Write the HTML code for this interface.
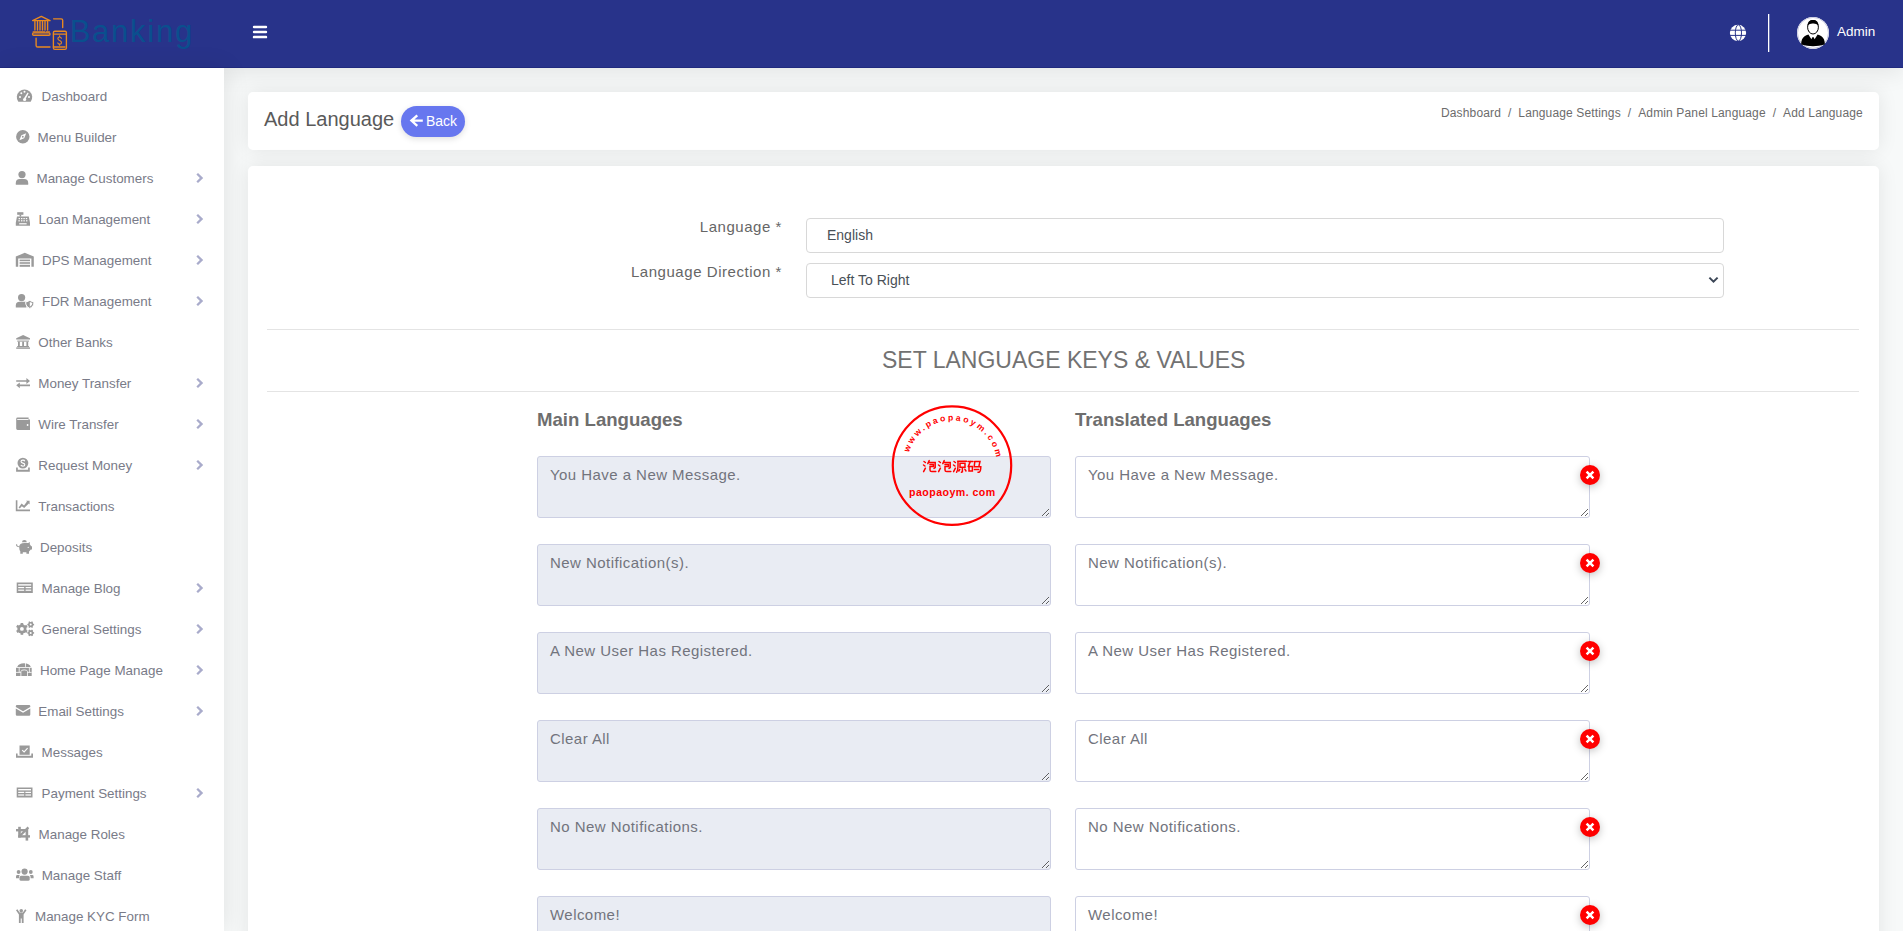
<!DOCTYPE html>
<html><head><meta charset="utf-8">
<style>
*{box-sizing:border-box;margin:0;padding:0}
html,body{width:1903px;height:931px;overflow:hidden}
body{background:#f7f9f9;font-family:"Liberation Sans",sans-serif;position:relative}
.hdr{position:absolute;left:0;top:0;width:1903px;height:68px;background:#28338a;border-bottom:1px solid #202a7e;box-shadow:0 4px 24px rgba(0,0,0,0.09)}
.logo-t{position:absolute;left:69.7px;top:14px;font-size:31px;color:#0a4f8e;letter-spacing:1.75px;line-height:36px}
.side{position:absolute;left:0;top:68px;width:224px;height:863px;background:#fff;box-shadow:2px 0 24px rgba(0,0,0,0.09)}
.card{position:absolute;left:248px;width:1631px;background:#fff;border-radius:5px;box-shadow:0 0 20px rgba(0,0,0,0.085)}
.si{position:absolute;left:0;width:224px;height:20px;font-size:14px;color:#6f737e;line-height:20px}
.si span{position:absolute;top:0;white-space:nowrap}
.si svg{position:absolute}
.chev{position:absolute;left:196px;top:5px}
.st{position:absolute;font-size:13.4px;color:#797b88;line-height:20px;white-space:nowrap}
.abs{position:absolute;white-space:nowrap}
textarea{position:absolute;width:514px;height:62px;border:1px solid #cdd0e3;border-radius:3px;font-family:"Liberation Sans",sans-serif;font-size:15px;color:#72747d;padding:8px 12px;resize:vertical;letter-spacing:0.45px;line-height:19px;outline:none}
textarea.l{left:537px;background:#e9ecf3}
textarea.r{left:1075px;width:515px;background:#fff}
.x{position:absolute;left:1580px;width:20px;height:20px;border-radius:50%;background:#ff0000;box-shadow:0 2px 8px rgba(0,0,0,0.25)}
.x svg{position:absolute;left:0;top:0}
</style></head><body>
<div class="hdr"></div>
<div class="logo-t">Banking</div>

<svg width="1903" height="68" style="position:absolute;left:0;top:0">
<g fill="none" stroke="#ea8a1f" stroke-width="1.35" stroke-linecap="round" stroke-linejoin="round">
<path d="M32.6 20.6L41.3 16.4L50 20.6Z"/>
<path d="M34.9 21.4V30M37.5 21.4V30M40 21.4V30M42.5 21.4V30M45 21.4V30M47.6 21.4V30"/>
<path d="M33.2 31.9H44.6M46.3 31.9H49.4"/>
<rect x="32.6" y="32.9" width="17.4" height="2.3" rx="1"/>
<path d="M53.6 18.8H61.2Q62.7 18.8 62.7 20.3V27.6"/>
<path d="M36.1 38.2V45.4Q36.1 47 37.7 47H50"/>
<rect x="53.4" y="31.2" width="13" height="18.2" rx="1.4"/>
<path d="M53.4 34.1H66.4M53.4 47H65"/>
<path d="M61.4 38.2Q60.8 36.9 59.5 37Q57.9 37.1 57.9 38.6Q57.9 40 59.6 40.6Q61.5 41.2 61.5 42.7Q61.5 44.1 59.7 44.1Q58.4 44.1 57.8 42.9M59.6 35.9V37M59.6 44.1V45.2" stroke-width="1.1"/>
</g>
<g fill="#fff">
<rect x="252.8" y="25.8" width="14.4" height="2.5" rx="1.2"/>
<rect x="252.8" y="30.8" width="14.4" height="2.5" rx="1.2"/>
<rect x="252.8" y="35.85" width="14.4" height="2.5" rx="1.2"/>
</g>
<g>
<circle cx="1738" cy="32.9" r="8.1" fill="#fff"/>
<g fill="none" stroke="#28338a" stroke-width="1">
<path d="M1729.8 30.2H1746.2M1729.8 35.4H1746.2"/>
<ellipse cx="1738.4" cy="32.9" rx="3.1" ry="8.1"/>
</g>
</g>
<rect x="1768" y="14" width="1.3" height="38" fill="#fff"/>
<circle cx="1813" cy="32.9" r="16" fill="#fff"/>
<circle cx="1813" cy="32.9" r="15.5" fill="none" stroke="#c9cbe0" stroke-width="1"/>
<path d="M1801.2 44.6Q1801 38.6 1804.6 36.2Q1806.2 35 1808.4 34.4L1811.4 39.2L1812.2 37.4H1813.8L1814.6 39.2L1817.6 34.4Q1819.8 35 1821.4 36.2Q1825 38.6 1824.8 44.6Q1819 46.2 1813 46.2Q1807 46.2 1801.2 44.6Z" fill="#000"/>
<path d="M1812.3 37.6H1813.7L1814.4 43L1813 45L1811.6 43Z" fill="#000"/>
<ellipse cx="1813" cy="27.2" rx="5.4" ry="6.8" fill="none" stroke="#000" stroke-width="1"/>
<path d="M1807.6 25.6Q1807.4 20 1813 20Q1818.6 20 1818.4 25.6Q1816.2 23.4 1813 23.6Q1809.8 23.4 1807.6 25.6Z" fill="#000"/>
</svg>
<div class="abs" style="left:1837px;top:24px;font-size:13.5px;color:#fff;line-height:16px">Admin</div>
<div class="side"></div>
<div class="card" style="top:92px;height:58px"></div>
<div class="card" style="top:166px;height:800px"></div>
<div class="abs" style="left:264px;top:108px;font-size:20px;color:#5a5a5a;line-height:23px">Add Language</div>
<div class="abs" style="left:401px;top:106px;width:64px;height:31px;border-radius:16px;background:#6777ef;box-shadow:0 2px 6px rgba(0,0,0,0.13)"></div>
<svg width="16" height="16" style="position:absolute;left:408px;top:113px"><path d="M9.3 2.3L3.4 7.6L9.3 12.9M3.4 7.6H14.8" fill="none" stroke="#fff" stroke-width="2.3" stroke-linejoin="miter"/></svg>
<div class="abs" style="left:426px;top:113px;font-size:14px;color:#fff;line-height:16px">Back</div>
<div class="abs" style="left:1441px;top:106px;font-size:12px;color:#6c6c6c;line-height:14px;letter-spacing:0.14px">Dashboard&nbsp;&nbsp;/&nbsp;&nbsp;Language Settings&nbsp;&nbsp;/&nbsp;&nbsp;Admin Panel Language&nbsp;&nbsp;/&nbsp;&nbsp;Add Language</div>

<div class="abs" style="left:482px;width:300px;text-align:right;top:218px;font-size:15px;color:#666;line-height:17px;letter-spacing:0.55px">Language *</div>
<div class="abs" style="left:482px;width:300px;text-align:right;top:263px;font-size:15px;color:#666;line-height:17px;letter-spacing:0.55px">Language Direction *</div>
<div class="abs" style="left:806px;top:218px;width:918px;height:35px;border:1px solid #d8d8d8;border-radius:4px"></div>
<div class="abs" style="left:827px;top:227px;font-size:14px;color:#495057;line-height:16px">English</div>
<div class="abs" style="left:806px;top:263px;width:918px;height:35px;border:1px solid #d8d8d8;border-radius:4px"></div>
<div class="abs" style="left:831px;top:272px;font-size:14px;color:#495057;line-height:16px">Left To Right</div>
<svg width="12" height="8" style="position:absolute;left:1708px;top:276px"><path d="M1.4 1.6L5.5 5.6L9.6 1.6" fill="none" stroke="#3b4656" stroke-width="2"/></svg>

<div class="abs" style="left:267px;top:329px;width:1592px;height:1px;background:#e4e4e4"></div>
<div class="abs" style="left:882px;top:347px;font-size:23px;color:#727272;line-height:26px">SET LANGUAGE KEYS &amp; VALUES</div>
<div class="abs" style="left:267px;top:391px;width:1592px;height:1px;background:#e4e4e4"></div>

<div class="abs" style="left:537px;top:408.5px;font-size:18.6px;font-weight:bold;color:#6e6e6e;line-height:21px">Main Languages</div>
<div class="abs" style="left:1075px;top:408.5px;font-size:18.6px;font-weight:bold;color:#6e6e6e;line-height:21px">Translated Languages</div>

<textarea class="l" style="top:456px">You Have a New Message.</textarea>
<textarea class="r" style="top:456px">You Have a New Message.</textarea><div class="x" style="top:465px"><svg width="20" height="20"><path d="M6.6 6.7L13.4 13.3M13.4 6.7L6.6 13.3" stroke="#fff" stroke-width="2.5"/></svg></div>
<textarea class="l" style="top:544px">New Notification(s).</textarea>
<textarea class="r" style="top:544px">New Notification(s).</textarea><div class="x" style="top:553px"><svg width="20" height="20"><path d="M6.6 6.7L13.4 13.3M13.4 6.7L6.6 13.3" stroke="#fff" stroke-width="2.5"/></svg></div>
<textarea class="l" style="top:632px">A New User Has Registered.</textarea>
<textarea class="r" style="top:632px">A New User Has Registered.</textarea><div class="x" style="top:641px"><svg width="20" height="20"><path d="M6.6 6.7L13.4 13.3M13.4 6.7L6.6 13.3" stroke="#fff" stroke-width="2.5"/></svg></div>
<textarea class="l" style="top:720px">Clear All</textarea>
<textarea class="r" style="top:720px">Clear All</textarea><div class="x" style="top:729px"><svg width="20" height="20"><path d="M6.6 6.7L13.4 13.3M13.4 6.7L6.6 13.3" stroke="#fff" stroke-width="2.5"/></svg></div>
<textarea class="l" style="top:808px">No New Notifications.</textarea>
<textarea class="r" style="top:808px">No New Notifications.</textarea><div class="x" style="top:817px"><svg width="20" height="20"><path d="M6.6 6.7L13.4 13.3M13.4 6.7L6.6 13.3" stroke="#fff" stroke-width="2.5"/></svg></div>
<textarea class="l" style="top:896px">Welcome!</textarea>
<textarea class="r" style="top:896px">Welcome!</textarea><div class="x" style="top:905px"><svg width="20" height="20"><path d="M6.6 6.7L13.4 13.3M13.4 6.7L6.6 13.3" stroke="#fff" stroke-width="2.5"/></svg></div>


<svg width="140" height="140" viewBox="882 396 140 140" style="position:absolute;left:882px;top:396px;overflow:visible">
<circle cx="952" cy="465.6" r="59.2" fill="none" stroke="#f00" stroke-width="2.2"/>
<defs><path id="arc" d="M908.9 452.6A45 45 0 0 1 996.7 460.1"/></defs>
<text font-family="Liberation Sans" font-size="8.6" font-weight="bold" fill="#f00" letter-spacing="2.3"><textPath href="#arc">www.paopaoym.com</textPath></text>
<text x="952.3" y="496.3" font-family="Liberation Sans" font-size="10.6" font-weight="bold" fill="#f00" text-anchor="middle" letter-spacing="0.45">paopaoym. com</text>
<g fill="none" stroke="#f00" stroke-width="1.5" stroke-linecap="round">
<!-- 泡 -->
<path d="M924 461.5l1.4 1M923.5 465l1.4 1M923.6 471.6l1.8-3.4"/>
<path d="M929.2 460.6l-1.4 3M928.6 462.4h6.6v5.2l-1.2 0.8M930 464.4h3.4v2.2h-3.4v3.4q0 1.6 1.8 1.6h4"/>
<!-- 泡 -->
<path d="M939 461.5l1.4 1M938.5 465l1.4 1M938.6 471.6l1.8-3.4"/>
<path d="M944.2 460.6l-1.4 3M943.6 462.4h6.6v5.2l-1.2 0.8M945 464.4h3.4v2.2h-3.4v3.4q0 1.6 1.8 1.6h4"/>
<!-- 源 -->
<path d="M954 461.5l1.4 1M953.5 465l1.4 1M953.6 471.6l1.8-3.4"/>
<path d="M957.6 461.2h9M958 461.2v5q0 4-1.4 6M960 463.2h5v4h-5zM962.4 467.2v4.6l-1 0.4M959.8 469.4l-1 1.6M964.8 469.2l1.2 1.8"/>
<!-- 码 -->
<path d="M968 461.4h5M970.4 461.4l-2.2 5.2M969 466.6h3.4v4.4h-3.4z"/>
<path d="M974.6 461.4h5.4l-1 4.4M974.8 461.4l-0.6 5.4h6.6q0 4.6-1.6 5.4h-1.2M974.4 469.4h4.2"/>
</g>
</svg>
<div class="st" style="left:41.6px;top:87px">Dashboard</div>
<div class="st" style="left:37.6px;top:128px">Menu Builder</div>
<div class="st" style="left:36.5px;top:169px">Manage Customers</div>
<div class="st" style="left:38.6px;top:210px">Loan Management</div>
<div class="st" style="left:42.0px;top:251px">DPS Management</div>
<div class="st" style="left:42.0px;top:292px">FDR Management</div>
<div class="st" style="left:38.3px;top:333px">Other Banks</div>
<div class="st" style="left:38.3px;top:374px">Money Transfer</div>
<div class="st" style="left:38.3px;top:415px">Wire Transfer</div>
<div class="st" style="left:38.3px;top:456px">Request Money</div>
<div class="st" style="left:38.3px;top:497px">Transactions</div>
<div class="st" style="left:40.0px;top:538px">Deposits</div>
<div class="st" style="left:41.6px;top:579px">Manage Blog</div>
<div class="st" style="left:41.6px;top:620px">General Settings</div>
<div class="st" style="left:40.0px;top:661px">Home Page Manage</div>
<div class="st" style="left:38.3px;top:702px">Email Settings</div>
<div class="st" style="left:41.6px;top:743px">Messages</div>
<div class="st" style="left:41.6px;top:784px">Payment Settings</div>
<div class="st" style="left:38.6px;top:825px">Manage Roles</div>
<div class="st" style="left:41.7px;top:866px">Manage Staff</div>
<div class="st" style="left:35.0px;top:907px">Manage KYC Form</div>
<svg class="ov" width="224" height="931" viewBox="0 0 224 931" style="position:absolute;left:0;top:0">
<g fill="#9a9a9a">
<!-- dashboard gauge x16.8-32.2 y89.5-101.8 -->
<path d="M18.3 101.8A7.7 7.7 0 1 1 30.7 101.8Z"/>
<g fill="#fff"><circle cx="20" cy="97" r="1"/><circle cx="21.3" cy="93.2" r="1"/><circle cx="24.5" cy="91.8" r="1"/><circle cx="29" cy="97" r="1"/><path d="M27.6 92.6L28.6 93.3L25.6 99L23.8 98.4Z"/><circle cx="24.6" cy="99.5" r="1.6"/></g>
<!-- compass x16.1-29.5 y130-143.5 -->
<circle cx="22.8" cy="136.75" r="6.7"/>
<path fill="#fff" d="M26.2 133.3L24.2 138.2L19.4 140.2L21.4 135.3Z"/>
<circle cx="22.8" cy="136.75" r="0.9" fill="#9a9a9a"/>
<!-- user x15.8-28.2 y171-184.8 -->
<circle cx="22" cy="174.6" r="3.6"/>
<path d="M15.8 184.8V183.2Q15.8 179 19.8 179H24.2Q28.2 179 28.2 183.2V184.8Z"/>
<!-- cash register x15.8-30 y212.2-225.8 -->
<rect x="17.2" y="212.2" width="6.2" height="2.6"/>
<rect x="19.6" y="214.6" width="1.6" height="2"/>
<path d="M17 216.4H28.8L30 222.8V225.8H15.8V222.8Z"/>
<g fill="#fff"><rect x="18.6" y="218" width="1.4" height="1.2"/><rect x="21" y="218" width="1.4" height="1.2"/><rect x="23.4" y="218" width="1.4" height="1.2"/><rect x="25.8" y="218" width="1.4" height="1.2"/><rect x="18.4" y="220.2" width="1.4" height="1.2"/><rect x="21" y="220.2" width="1.4" height="1.2"/><rect x="23.4" y="220.2" width="1.4" height="1.2"/><rect x="26" y="220.2" width="1.4" height="1.2"/><rect x="19.2" y="223.2" width="7.4" height="1.2"/></g>
<!-- warehouse x15.8-33.8 y252.8-266.8 -->
<path d="M15.8 266.8V256.6L24.8 252.8L33.8 256.6V266.8H31.4V258.4H18.2V266.8Z"/>
<rect x="19.6" y="259.6" width="10.4" height="1.6"/><rect x="19.6" y="262.2" width="10.4" height="1.6"/><rect x="19.6" y="264.8" width="10.4" height="2"/>
<!-- user shield x15.8-33.8 y294-307.6 -->
<circle cx="21.6" cy="297.6" r="3.6"/>
<path d="M15.8 307.6V305.4Q15.8 301.8 19.6 301.8H25.2Q26 301.8 26.4 302V307.6Z"/>
<path d="M25.6 302.2L29.8 300.4L34 302.2Q34 306.6 29.8 308.4Q25.6 306.6 25.6 302.2Z" stroke="#fff" stroke-width="1"/>
<path fill="#fff" d="M29.8 302L32.4 303Q32.2 305.6 29.8 306.8Z"/>
<!-- university x16.2-30 y335-348.8 -->
<path d="M16.2 338.2L23.1 335L30 338.2V339.6H16.2Z"/>
<rect x="17.2" y="340.6" width="11.8" height="1"/>
<rect x="18" y="341.6" width="1.8" height="4.4"/><rect x="22.2" y="341.6" width="1.8" height="4.4"/><rect x="26.4" y="341.6" width="1.8" height="4.4"/>
<rect x="17.2" y="346" width="11.8" height="1.2"/><rect x="16.2" y="347.4" width="13.8" height="1.4"/>
<!-- exchange x16.2-30 y378-388 -->
<path d="M16.2 380.2H26.4V378L30 381L26.4 384V381.8H16.2Z"/>
<path d="M30 384.6H19.8V382.4L16.2 385.3L19.8 388.2V386.2H30Z"/>
<!-- wallet x16.2-30 y417.5-430 -->
<path d="M17.6 417.5H28.6V419.6H30V430H17.6Q16.2 430 16.2 428.6V418.9Q16.2 417.5 17.6 417.5Z"/>
<rect x="17.2" y="419.1" width="11.2" height="0.9" fill="#fff"/>
<circle cx="27.6" cy="425" r="0.9" fill="#fff"/>
<!-- request money -->
<circle cx="22.9" cy="463.1" r="5.4"/>
<path d="M24.8 461.2Q24.4 460.1 22.9 460.1Q21 460.1 21 461.6Q21 462.8 22.9 463.1Q24.8 463.4 24.8 464.7Q24.8 466.1 22.9 466.1Q21.3 466.1 20.9 465" fill="none" stroke="#fff" stroke-width="1.1"/>
<path d="M16.1 467.4H17.8V469.8H28.1V467.4H29.8V471.7H16.1Z"/>
<!-- chart line x15.8-30 y500.3-511.2 -->
<path d="M15.8 500.3H17.4V509.6H30V511.2H15.8Z"/>
<path d="M18.6 507.4L21.6 503.6L24 505.6L27 501.6L26 500.8H29.6V504.4L28.8 503.4L24.2 508L21.8 506.2L19.8 508.6Z"/>
<!-- piggy -->
<path d="M22 542.2Q22 539.9 24.4 539.9Q26.8 539.9 26.8 542.2Z"/>
<path d="M19.2 547.2Q19.2 543 24.5 543H28.2L29.8 542V544.2Q30.7 545 31 546.2H32V549.6H30.8Q30.1 550.8 29 551.6V553.8H26.4V552.2H22.8V553.8H20.3V551.2Q19.2 549.8 19.2 547.2Z"/>
<path d="M16.6 544.2Q16.4 546.8 19.6 546.8" fill="none" stroke="#9a9a9a" stroke-width="1.1"/>
<circle cx="28.2" cy="547.4" r="0.55" fill="#fff"/>
<!-- blog newspaper x16.7-32.8 y582.5-593 -->
<path d="M16.7 582.5H32.8V593H16.7Z"/>
<g fill="#fff"><rect x="18.2" y="584.2" width="13" height="1.4"/><rect x="18.2" y="587" width="6" height="1.2"/><rect x="25.6" y="587" width="5.6" height="1.2"/><rect x="18.2" y="589.6" width="6" height="1.2"/><rect x="25.6" y="589.6" width="5.6" height="1.2"/></g>
<!-- cogs -->
<circle cx="21.9" cy="628.9" r="4.6"/><rect x="20.60" y="623.00" width="2.6" height="5.90" transform="rotate(0.0 21.9 628.9)"/><rect x="20.60" y="623.00" width="2.6" height="5.90" transform="rotate(60.0 21.9 628.9)"/><rect x="20.60" y="623.00" width="2.6" height="5.90" transform="rotate(120.0 21.9 628.9)"/><rect x="20.60" y="623.00" width="2.6" height="5.90" transform="rotate(180.0 21.9 628.9)"/><rect x="20.60" y="623.00" width="2.6" height="5.90" transform="rotate(240.0 21.9 628.9)"/><rect x="20.60" y="623.00" width="2.6" height="5.90" transform="rotate(300.0 21.9 628.9)"/><circle cx="21.9" cy="628.9" r="1.9" fill="#fff"/>
<circle cx="30.7" cy="624.6" r="2.6"/><rect x="29.95" y="621.20" width="1.5" height="3.40" transform="rotate(30.0 30.7 624.6)"/><rect x="29.95" y="621.20" width="1.5" height="3.40" transform="rotate(90.0 30.7 624.6)"/><rect x="29.95" y="621.20" width="1.5" height="3.40" transform="rotate(150.0 30.7 624.6)"/><rect x="29.95" y="621.20" width="1.5" height="3.40" transform="rotate(210.0 30.7 624.6)"/><rect x="29.95" y="621.20" width="1.5" height="3.40" transform="rotate(270.0 30.7 624.6)"/><rect x="29.95" y="621.20" width="1.5" height="3.40" transform="rotate(330.0 30.7 624.6)"/><circle cx="30.7" cy="624.6" r="1.0" fill="#fff"/>
<circle cx="30.7" cy="632.9" r="2.6"/><rect x="29.95" y="629.50" width="1.5" height="3.40" transform="rotate(30.0 30.7 632.9)"/><rect x="29.95" y="629.50" width="1.5" height="3.40" transform="rotate(90.0 30.7 632.9)"/><rect x="29.95" y="629.50" width="1.5" height="3.40" transform="rotate(150.0 30.7 632.9)"/><rect x="29.95" y="629.50" width="1.5" height="3.40" transform="rotate(210.0 30.7 632.9)"/><rect x="29.95" y="629.50" width="1.5" height="3.40" transform="rotate(270.0 30.7 632.9)"/><rect x="29.95" y="629.50" width="1.5" height="3.40" transform="rotate(330.0 30.7 632.9)"/><circle cx="30.7" cy="632.9" r="1.0" fill="#fff"/>
<!-- igloo -->
<path d="M17.2 666.9Q18.6 663.2 24 663.2Q29.4 663.2 30.8 666.9Z"/>
<rect x="16" y="667.8" width="15.7" height="8.2"/>
<g fill="none" stroke="#fff" stroke-width="0.8">
<path d="M20.9 676V671.6Q20.9 669.9 24.2 669.9Q27.5 669.9 27.5 671.6V676"/>
<path d="M19.2 667.8V672.4M29.4 667.8V672.4M16 672.4H20.9M27.5 672.4H31.7M25.5 663V666.9"/>
</g>
<!-- envelope x15.8-30.3 y705-715.8 -->
<path d="M15.8 706.2Q15.8 705 17 705H29.1Q30.3 705 30.3 706.2V707L23.05 711.2L15.8 707Z"/>
<path d="M15.8 708.6L23.05 712.8L30.3 708.6V714.6Q30.3 715.8 29.1 715.8H17Q15.8 715.8 15.8 714.6Z"/>
<!-- vote yea -->
<path d="M19.5 745.5H29.7V754.8H19.5Z"/>
<path fill="none" stroke="#fff" stroke-width="1.1" d="M22.2 750.1L24.1 751.9L27.6 748.2"/>
<path d="M16 753.4H17.6V755.8H31.3V753.4H33V757.8H16Z"/>
<!-- payment x16.7-32.5 y787.5-797.5 -->
<path d="M16.7 787.5H32.5V797.5H16.7Z"/>
<g fill="#fff"><rect x="18.2" y="789" width="12.8" height="1.4"/><rect x="18.2" y="791.8" width="6" height="1.2"/><rect x="25.4" y="791.8" width="5.6" height="1.2"/><rect x="18.2" y="794.4" width="6" height="1.2"/><rect x="25.4" y="794.4" width="5.6" height="1.2"/></g>
<!-- crop -->
<rect x="18.2" y="826.8" width="2.6" height="10.8"/>
<rect x="18.2" y="835.2" width="11.8" height="2.4"/>
<rect x="16" y="829" width="11.8" height="2.4"/>
<rect x="25.6" y="829" width="2.6" height="11.6"/>
<path d="M27.6 826.6L29.2 828.2L20.8 836.6L19.2 835Z"/>
<!-- users -->
<circle cx="24.6" cy="871.6" r="3.1"/>
<rect x="19.5" y="875.8" width="10.2" height="5" rx="1.6"/>
<circle cx="18.6" cy="872" r="1.9"/><circle cx="30.8" cy="872" r="1.9"/>
<path d="M16 878.2V876.4Q16 875 17.4 875H19.8Q19 876 19 877.2V878.2Z"/>
<path d="M33.6 878.2V876.4Q33.6 875 32.2 875H29.8Q30.6 876 30.6 877.2V878.2Z"/>
<!-- child x16-26.5 y909-922.9 -->
<circle cx="21.25" cy="910.8" r="1.8"/>
<path d="M16 910.2L17.4 909.2L19.6 912.6H22.9L25.1 909.2L26.5 910.2L23.6 914.4V922.9H21.8V918.6H20.7V922.9H18.9V914.4Z"/>
</g>
<g fill="#a9abcb"><path d="M196.4 174.6L198 173L203.2 178L198 183L196.4 181.4L199.9 178Z"/><path d="M196.4 215.6L198 214L203.2 219L198 224L196.4 222.4L199.9 219Z"/><path d="M196.4 256.6L198 255L203.2 260L198 265L196.4 263.4L199.9 260Z"/><path d="M196.4 297.6L198 296L203.2 301L198 306L196.4 304.4L199.9 301Z"/><path d="M196.4 379.6L198 378L203.2 383L198 388L196.4 386.4L199.9 383Z"/><path d="M196.4 420.6L198 419L203.2 424L198 429L196.4 427.4L199.9 424Z"/><path d="M196.4 461.6L198 460L203.2 465L198 470L196.4 468.4L199.9 465Z"/><path d="M196.4 584.6L198 583L203.2 588L198 593L196.4 591.4L199.9 588Z"/><path d="M196.4 625.6L198 624L203.2 629L198 634L196.4 632.4L199.9 629Z"/><path d="M196.4 666.6L198 665L203.2 670L198 675L196.4 673.4L199.9 670Z"/><path d="M196.4 707.6L198 706L203.2 711L198 716L196.4 714.4L199.9 711Z"/><path d="M196.4 789.6L198 788L203.2 793L198 798L196.4 796.4L199.9 793Z"/></g></svg>
</body></html>
